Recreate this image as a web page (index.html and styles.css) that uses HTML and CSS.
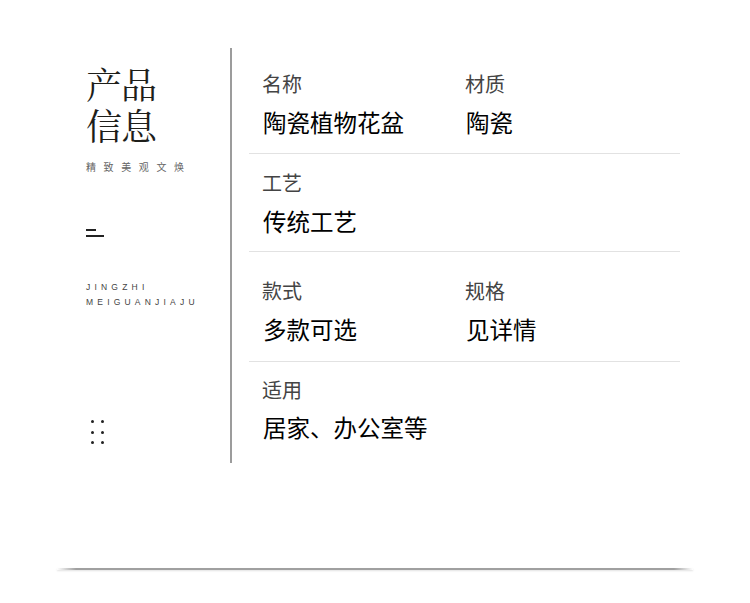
FILE: index.html
```html
<!DOCTYPE html>
<html lang="zh-CN">
<head>
<meta charset="utf-8">
<title>产品信息</title>
<link rel="stylesheet" href="styles.css">
</head>
<body>
<div class="page">
  <div class="panel">
    <aside class="side">
      <h1 class="title">产品<br>信息</h1>
      <p class="subtitle">精致美观文焕</p>
      <div class="mark"><span class="mark-a"></span><span class="mark-b"></span></div>
      <p class="pinyin">JINGZHI<br>MEIGUANJIAJU</p>
      <div class="dots">
        <span></span><span></span><span></span><span></span><span></span><span></span>
      </div>
    </aside>
    <section class="info">
      <div class="row row-first">
        <div class="cell"><div class="label">名称</div><div class="value">陶瓷植物花盆</div></div>
        <div class="cell"><div class="label">材质</div><div class="value">陶瓷</div></div>
      </div>
      <div class="row">
        <div class="cell"><div class="label">工艺</div><div class="value">传统工艺</div></div>
      </div>
      <div class="row row-tall">
        <div class="cell"><div class="label">款式</div><div class="value">多款可选</div></div>
        <div class="cell"><div class="label">规格</div><div class="value">见详情</div></div>
      </div>
      <div class="row row-last">
        <div class="cell"><div class="label">适用</div><div class="value">居家、办公室等</div></div>
      </div>
    </section>
  </div>
  <div class="baseline"></div>
</div>
</body>
</html>
```

FILE: styles.css
```css
html, body {
  margin: 0;
  padding: 0;
  background: #ffffff;
}
body {
  font-family: "Noto Sans CJK SC", "Liberation Sans", sans-serif;
  color: #111;
}
.page {
  width: 750px;
  height: 603px;
  padding-top: 48px;
  box-sizing: border-box;
}
.panel {
  display: flex;
  padding-left: 86px;
  height: 415px;
}
.side {
  width: 144px;
  border-right: 2px solid #9c9c9c;
  display: flex;
  flex-direction: column;
  padding-top: 15px;
  box-sizing: content-box;
}
.title {
  margin: 0;
  font-family: "Noto Serif CJK SC", "Noto Sans CJK SC", serif;
  font-weight: 400;
  font-size: 36px;
  line-height: 41px;
  color: #1e1e1a;
  letter-spacing: -1px;
}
.subtitle {
  margin: 15px 0 0;
  font-size: 10px;
  line-height: 14px;
  letter-spacing: 7.6px;
  color: #666;
}
.mark {
  margin-top: 55px;
  display: flex;
  flex-direction: column;
  gap: 4px;
}
.mark span {
  display: block;
  height: 2px;
  background: #222;
}
.mark-a { width: 10px; }
.mark-b { width: 18px; }
.pinyin {
  margin: 43px 0 0;
  font-family: "Liberation Sans", sans-serif;
  font-size: 8.5px;
  line-height: 15px;
  letter-spacing: 4.2px;
  color: #444;
}
.dots {
  margin-top: 110px;
  margin-left: 5px;
  display: grid;
  grid-template-columns: 3px 3px;
  column-gap: 7px;
  row-gap: 7.5px;
}
.dots span {
  width: 3px;
  height: 3px;
  border-radius: 50%;
  background: #222;
}
.info {
  margin-left: 17px;
  width: 431px;
  display: flex;
  flex-direction: column;
}
.row {
  display: flex;
  padding: 17px 0 16px 13px;
  border-bottom: 1px solid #e2e2e2;
}
.row-first { padding: 24px 0 17px 13px; }
.row-tall { padding: 27px 0 18px 13px; }
.row-last { border-bottom: none; padding-top: 16px; }
.row-last .value { margin-top: 11px; }
.cell {
  width: 203px;
}
.label {
  font-size: 20px;
  line-height: 24px;
  color: #444;
}
.value {
  margin-top: 12px;
  margin-left: 1px;
  font-size: 23.5px;
  line-height: 28px;
  font-weight: 400;
  color: #000;
}
.baseline {
  margin: 105px auto 0;
  width: 636px;
  height: 2px;
  background: linear-gradient(to right, rgba(150,150,150,0) 0%, #a0a0a0 3%, #a0a0a0 97%, rgba(150,150,150,0) 100%);
  box-shadow: 0 1px 2px rgba(0,0,0,0.12);
}
```
